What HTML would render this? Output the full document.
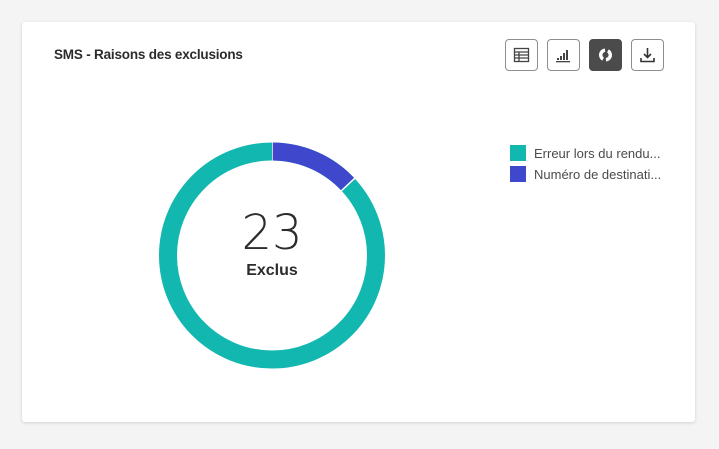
<!DOCTYPE html><html><head><style>
body{margin:0;width:719px;height:449px;background:#f4f4f4;font-family:"Liberation Sans",sans-serif;position:relative;overflow:hidden}
.card{position:absolute;left:22px;top:22px;width:673px;height:400px;background:#fff;border-radius:3px;box-shadow:0 1px 3px rgba(0,0,0,.15)}
.t{position:absolute;left:54px;top:47px;font-size:13.5px;color:#2c2c2c;font-weight:bold;letter-spacing:-.2px}
.b{position:absolute;top:39px;width:31px;height:30px;border:1px solid #8e8e8e;border-radius:4px;background:#fff}
.b svg{position:absolute;left:7px;top:7px}
.lg{position:absolute;left:510px;font-size:13px;color:#4b4b4b}
.lg i{display:inline-block;width:16px;height:16px;vertical-align:-3px;margin-right:8px}
</style></head><body>
<div class="card"></div>
<div class="t">SMS - Raisons des exclusions</div>
<div class="b" style="left:505px"><svg width="17" height="16" viewBox="0 0 17 16" fill="none" stroke="#444" stroke-width="1.3"><rect x="1.5" y="1.5" width="14" height="13"/><path d="M1.5 5h14M1.5 8h14M1.5 11h14M6 5v9.5"/></svg></div>
<div class="b" style="left:547px"><svg width="17" height="16" viewBox="0 0 17 16" fill="#444"><rect x="2" y="11" width="2" height="2"/><rect x="5" y="9" width="2" height="4"/><rect x="8" y="6" width="2" height="7"/><rect x="11" y="3" width="2" height="10"/><rect x="1" y="14" width="14" height="1.3"/></svg></div>
<div class="b" style="left:589px;background:#4b4b4b;border-color:#4b4b4b"><svg width="17" height="16" viewBox="0 0 17 16"><circle cx="8.5" cy="8" r="4.8" fill="none" stroke="#fff" stroke-width="3.4" stroke-dasharray="12 3" transform="rotate(-60 8.5 8)"/></svg></div>
<div class="b" style="left:631px"><svg width="17" height="16" viewBox="0 0 17 16" fill="none" stroke="#333" stroke-width="1.6"><path d="M8.5 1v9M5 7l3.5 3.5L12 7M2 11v3.5h13V11"/></svg></div>
<svg style="position:absolute;left:0;top:0" width="719" height="449"><g transform="rotate(-90 272 255.5)"><circle cx="272" cy="255.5" r="104" fill="none" stroke="#12b7b0" stroke-width="18"/><circle cx="272" cy="255.5" r="104" fill="none" stroke="#3f48cc" stroke-width="18" stroke-dasharray="85.2 600"/><circle cx="272" cy="255.5" r="104" fill="none" stroke="#fff" stroke-width="19" stroke-dasharray="1.5 83.7 1.5 600" stroke-dashoffset="0.75"/></g></svg>
<div style="position:absolute;left:222px;top:205px;width:100px;text-align:center;font-family:'DejaVu Sans',sans-serif;font-size:48px;font-weight:200;color:#2c2c2c;line-height:56px">23</div>
<div style="position:absolute;left:222px;top:262px;width:100px;text-align:center;font-size:16px;font-weight:bold;color:#2c2c2c">Exclus</div>
<div class="lg" style="top:145px"><i style="background:#12b7b0"></i>Erreur lors du rendu...</div>
<div class="lg" style="top:166px"><i style="background:#3f48cc"></i>Numéro de destinati...</div>
</body></html>
